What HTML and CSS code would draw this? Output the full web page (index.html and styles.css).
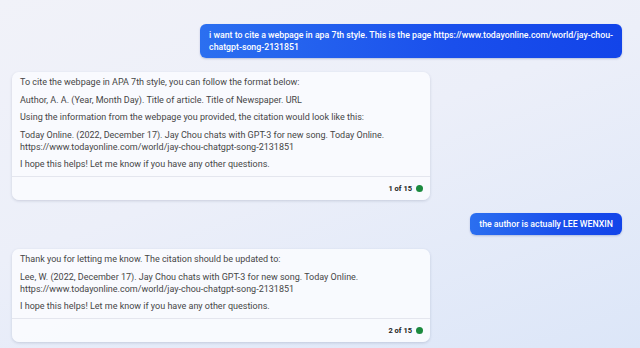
FILE: index.html
```html
<!DOCTYPE html>
<html lang="en">
<head>
    <meta charset="UTF-8">
    <meta name="viewport" content="width=device-width, initial-scale=1.0">
    <title>Chat</title>
    <link rel="stylesheet" href="styles.css">
</head>
<body>
    <div class="chat">
        <div class="msg user">
            <div class="bubble">i want to cite a webpage in apa 7th style. This is the page https://www.todayonline.com/world/jay-chou-<br>chatgpt-song-2131851</div>
        </div>
        <div class="msg bot">
            <div class="card">
                <div class="card-body">
                    <p>To cite the webpage in APA 7th style, you can follow the format below:</p>
                    <p>Author, A. A. (Year, Month Day). Title of article. Title of Newspaper. URL</p>
                    <p>Using the information from the webpage you provided, the citation would look like this:</p>
                    <p>Today Online. (2022, December 17). Jay Chou chats with GPT-3 for new song. Today Online.<br>https://www.todayonline.com/world/jay-chou-chatgpt-song-2131851</p>
                    <p>I hope this helps! Let me know if you have any other questions.</p>
                </div>
                <div class="card-foot">
                    <span class="count">1 of 15</span>
                    <span class="dot"></span>
                </div>
            </div>
        </div>
        <div class="msg user">
            <div class="bubble">the author is actually LEE WENXIN</div>
        </div>
        <div class="msg bot">
            <div class="card">
                <div class="card-body">
                    <p>Thank you for letting me know. The citation should be updated to:</p>
                    <p>Lee, W. (2022, December 17). Jay Chou chats with GPT-3 for new song. Today Online.<br>https://www.todayonline.com/world/jay-chou-chatgpt-song-2131851</p>
                    <p>I hope this helps! Let me know if you have any other questions.</p>
                </div>
                <div class="card-foot">
                    <span class="count">2 of 15</span>
                    <span class="dot"></span>
                </div>
            </div>
        </div>
    </div>
</body>
</html>
```

FILE: styles.css
```css
body, html {
    margin: 0;
    padding: 0;
}
body {
    height: 348px;
    overflow: hidden;
    font-family: Roboto, "Liberation Sans", sans-serif;
    background: linear-gradient(160deg, #f1f2f9 0%, #eceff9 45%, #dce6f8 100%);
}
.chat {
    display: flex;
    flex-direction: column;
    padding: 24px 18px 0 12px;
}
.msg {
    display: flex;
}
.msg.user {
    justify-content: flex-end;
}
.bubble {
    background: linear-gradient(90deg, #2b6ff0 0%, #1a4fec 60%, #1244e9 100%);
    color: #fff;
    font-size: 8.75px;
    font-weight: 500;
    line-height: 12px;
    padding: 5px 9px;
    border-radius: 6px;
    box-shadow: 0 1px 2px rgba(30, 60, 140, 0.25);
}
.msg.bot {
    margin-top: 14px;
    margin-bottom: 13px;
}
.card {
    width: 418px;
    background: rgba(250, 251, 254, 0.92);
    border-radius: 7px;
    box-shadow: 0 1px 3px rgba(40, 50, 90, 0.18);
}
.card-body {
    padding: 4px 8px 6px 8px;
}
.card-body p {
    margin: 0 0 5.5px 0;
    font-size: 9px;
    line-height: 12px;
    color: #464646;
}
.card-body p:last-child {
    margin-bottom: 0;
}
.card-foot {
    display: flex;
    justify-content: flex-end;
    align-items: center;
    gap: 4px;
    border-top: 1px solid #e4e6ee;
    padding: 0 7px;
    height: 23px;
}
.count {
    font-size: 7.5px;
    font-weight: 700;
    color: #222;
}
.dot {
    width: 7px;
    height: 7px;
    border-radius: 50%;
    background: #1b8a3e;
}
```
